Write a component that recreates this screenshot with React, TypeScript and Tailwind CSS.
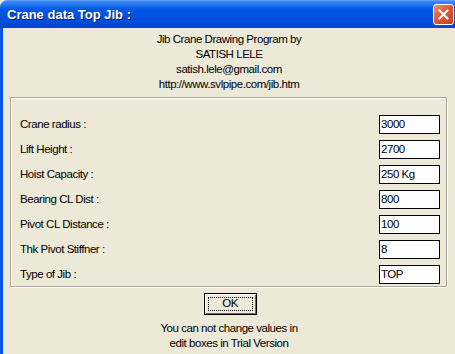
import React from 'react';

const ROWS: { label: string; value: string }[] = [
  { label: 'Crane radius :', value: '3000' },
  { label: 'Lift Height :', value: '2700' },
  { label: 'Hoist Capacity :', value: '250 Kg' },
  { label: 'Bearing CL Dist :', value: '800' },
  { label: 'Pivot CL Distance :', value: '100' },
  { label: 'Thk Pivot Stiffner :', value: '8' },
  { label: 'Type of Jib :', value: 'TOP' },
];

const font = "font-['Liberation_Sans',Arial,sans-serif]";

export default function App() {
  return (
    <div className={`w-[455px] h-[354px] flex flex-col overflow-hidden bg-[#ece9d8] text-black ${font}`}>
      {/* Title bar */}
      <div className="h-[28px] shrink-0 flex items-center justify-between rounded-tl-[7px] bg-gradient-to-b from-[#3d8cf6] via-[#0058e6] via-[30%] to-[#0047d0] border-t border-[#5fa0ff] pl-[7px] pr-[1px]">
        <span className="text-white font-bold text-[13px] [text-shadow:1px_1px_0_#0a1e6e]">
          Crane data Top Jib :
        </span>
        <div className="w-[21px] h-[21px] rounded-[3px] border border-white bg-gradient-to-br from-[#eb8f72] via-[#dc5634] to-[#c4401d] flex items-center justify-center">
          <svg width="11" height="11" viewBox="0 0 11 11">
            <path d="M1.5 1.5 L9.5 9.5 M9.5 1.5 L1.5 9.5" stroke="#fff" strokeWidth="2" strokeLinecap="square" />
          </svg>
        </div>
      </div>

      {/* Body */}
      <div className="flex-1 flex flex-col border-l-[3px] border-[#0055e5] text-[11.5px] tracking-[-0.45px]">
        <div className="pt-[4px] flex flex-col items-center leading-[15px]">
          <span>Jib Crane Drawing Program by</span>
          <span>SATISH LELE</span>
          <span>satish.lele@gmail.com</span>
          <span>http://www.svlpipe.com/jib.htm</span>
        </div>

        {/* Group box */}
        <div className="mt-[5px] ml-[7px] w-[437px] h-[190px] shrink-0 border border-[#aca899] shadow-[inset_1px_1px_0_#fff,1px_1px_0_#fff] pt-[17px] pl-[9px] pr-[6px] flex flex-col gap-[6px]">
          {ROWS.map((r) => (
            <div key={r.label} className="h-[19px] shrink-0 flex items-center justify-between">
              <span>{r.label}</span>
              <div className="w-[61px] h-[19px] border border-black bg-white pl-[1px] flex items-center">
                {r.value}
              </div>
            </div>
          ))}
        </div>

        {/* OK button */}
        <div className="mt-[6px] flex justify-center pl-[2px]">
          <div className="w-[53px] h-[22px] border border-black bg-[#ece9d8] shadow-[inset_1px_1px_0_#fff,inset_-1px_-1px_0_#716f64] p-[3px]">
            <div className="w-full h-full border border-dotted border-black flex items-center justify-center">
              OK
            </div>
          </div>
        </div>

        <div className="mt-[6px] flex flex-col items-center leading-[15px]">
          <span>You can not change values in</span>
          <span>edit boxes in Trial Version</span>
        </div>
      </div>
    </div>
  );
}
